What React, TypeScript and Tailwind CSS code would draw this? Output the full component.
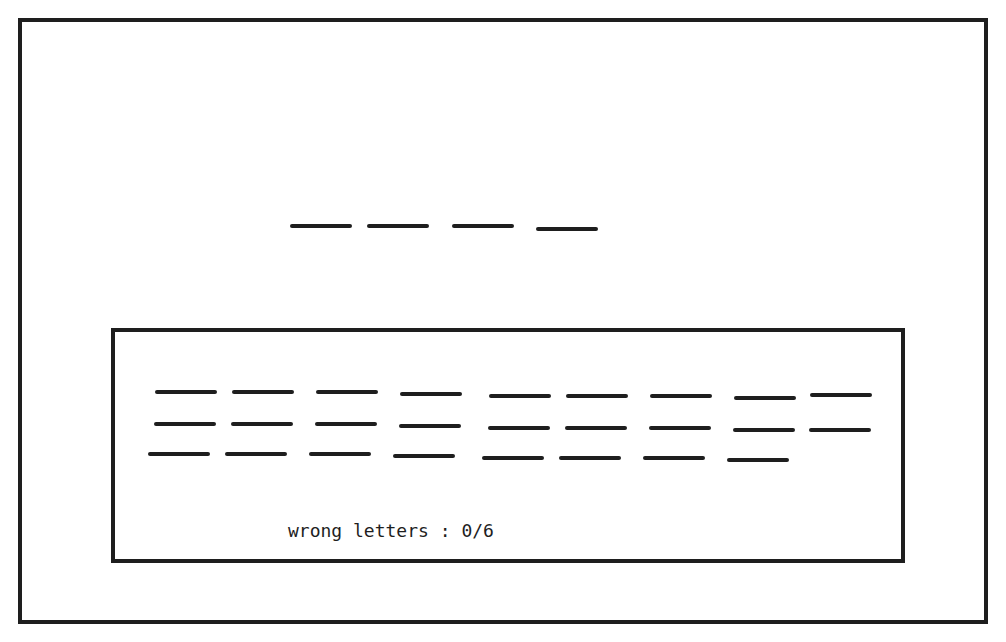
import React from "react";

type Dash = { letter: string; gap: string; drop: string };

const WORD = ["", "", "", ""];

// spacing between keys repeats the same pattern on every row
const GAPS = ["ml-0", "ml-[15px]", "ml-[22px]", "ml-[22px]", "ml-[27px]", "ml-[15px]", "ml-[22px]", "ml-[22px]", "ml-[14px]"];

const ROWS: { start: string; top: string; drops: string[]; letters: string }[] = [
  {
    start: "ml-[40px]",
    top: "mt-[58px]",
    drops: ["mt-0", "mt-0", "mt-0", "mt-[2px]", "mt-[4px]", "mt-[4px]", "mt-[4px]", "mt-[6px]", "mt-[3px]"],
    letters: "abcdefghi",
  },
  {
    start: "ml-[39px]",
    top: "mt-[28px]",
    drops: ["mt-0", "mt-0", "mt-0", "mt-[2px]", "mt-[4px]", "mt-[4px]", "mt-[4px]", "mt-[6px]", "mt-[6px]"],
    letters: "jklmnopqr",
  },
  {
    start: "ml-[33px]",
    top: "mt-[26px]",
    drops: ["mt-0", "mt-0", "mt-0", "mt-[2px]", "mt-[4px]", "mt-[4px]", "mt-[4px]", "mt-[6px]"],
    letters: "stuvwxyz",
  },
];

function Blank({ className = "" }: { className?: string }) {
  return <div className={`h-[4px] w-[62px] shrink-0 rounded-full bg-[#1e1e1e] ${className}`} />;
}

function KeyRow({ keys, start, top }: { keys: Dash[]; start: string; top: string }) {
  return (
    <div className={`flex h-[4px] items-start ${start} ${top}`}>
      {keys.map((k) => (
        <button key={k.letter} aria-label={k.letter} className={`${k.gap} ${k.drop}`}>
          <Blank />
        </button>
      ))}
    </div>
  );
}

export default function App() {
  const wrong = 0;

  return (
    <div className="h-[642px] w-[1006px] overflow-hidden bg-white pl-[18px] pt-[18px] font-['DejaVu_Sans_Mono',monospace] text-[#1e1e1e]">
      <div className="flex h-[606px] w-[970px] flex-col border-4 border-[#1e1e1e]">
        <div className="ml-[268px] mt-[202px] flex h-[8px] items-start">
          {WORD.map((_, i) => (
            <Blank
              key={i}
              className={["ml-0", "ml-[15px]", "ml-[23px]", "ml-[22px] mt-[3px]"][i]}
            />
          ))}
        </div>

        <div className="ml-[89px] mt-[96px] flex h-[235px] w-[794px] flex-col border-4 border-[#1e1e1e]">
          {ROWS.map((row, r) => (
            <KeyRow
              key={r}
              start={row.start}
              top={row.top}
              keys={row.letters.split("").map((l, i) => ({ letter: l, gap: GAPS[i], drop: row.drops[i] }))}
            />
          ))}
          <p className="ml-[173px] mt-[66px] text-[18px] leading-none whitespace-pre">
            wrong letters : {wrong}/6
          </p>
        </div>
      </div>
    </div>
  );
}
